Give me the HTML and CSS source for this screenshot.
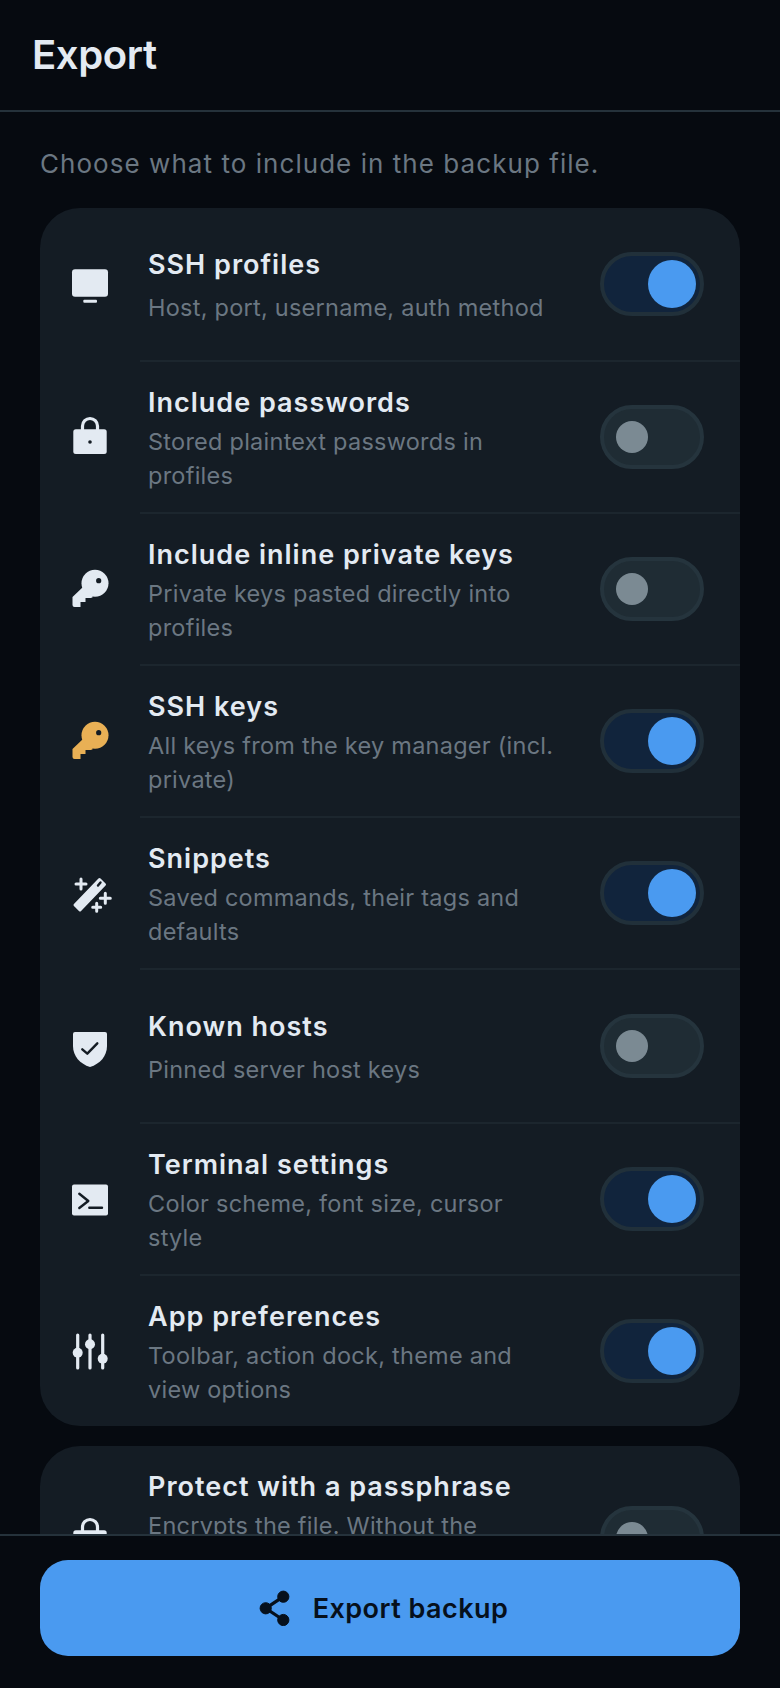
FILE: index.html
```html
<!DOCTYPE html>
<html lang="en">
<head>
  <meta charset="UTF-8" />
  <meta name="viewport" content="width=device-width, initial-scale=1" />
  <title>Export</title>
  <link rel="stylesheet" href="styles.css">
</head>
<body>
  <header class="top-bar">
    <h1>Export</h1>
  </header>

  <main class="content">
    <p class="intro">Choose what to include in the backup file.</p>

    <section class="card">
      <div class="row">
        <div class="row-icon">
          <svg viewBox="0 0 48 48"><rect x="6" y="9.3" width="36" height="27.4" rx="3"/><rect x="17.3" y="39.7" width="13.7" height="3" rx="1"/></svg>
        </div>
        <div class="row-body row-single">
          <div class="row-text">
            <div class="row-title">SSH profiles</div>
            <div class="row-desc">Host, port, username, auth method</div>
          </div>
          <div class="switch on"><span></span></div>
        </div>
      </div>

      <div class="row">
        <div class="row-icon">
          <svg viewBox="0 0 48 48"><path class="line" d="M16.5 17v-4a7.500 7.500 0 0 1 15 0v4"/><rect x="7.300" y="16.300" width="33.400" height="24.700" rx="2.500"/><circle class="cut" cx="24" cy="29" r="1.800"/></svg>
        </div>
        <div class="row-body">
          <div class="row-text">
            <div class="row-title">Include passwords</div>
            <div class="row-desc">Stored plaintext passwords in profiles</div>
          </div>
          <div class="switch"><span></span></div>
        </div>
      </div>

      <div class="row">
        <div class="row-icon">
          <svg viewBox="0 0 48 48"><circle cx="29" cy="18.300" r="13.500"/><path d="M6.500 32 17 22l10 10-2 1h-5.500v4h-5v5h-6a2 2 0 0 1-2-2z"/><circle class="cut" cx="32.700" cy="15.700" r="2.600"/></svg>
        </div>
        <div class="row-body">
          <div class="row-text">
            <div class="row-title">Include inline private keys</div>
            <div class="row-desc">Private keys pasted directly into profiles</div>
          </div>
          <div class="switch"><span></span></div>
        </div>
      </div>

      <div class="row">
        <div class="row-icon amber">
          <svg viewBox="0 0 48 48"><circle cx="29" cy="18.300" r="13.500"/><path d="M6.500 32 17 22l10 10-2 1h-5.500v4h-5v5h-6a2 2 0 0 1-2-2z"/><circle class="cut" cx="32.700" cy="15.700" r="2.600"/></svg>
        </div>
        <div class="row-body">
          <div class="row-text">
            <div class="row-title">SSH keys</div>
            <div class="row-desc">All keys from the key manager (incl. private)</div>
          </div>
          <div class="switch on"><span></span></div>
        </div>
      </div>

      <div class="row">
        <div class="row-icon">
          <svg viewBox="0 0 48 48"><path class="solid" d="M9 36 33.500 10.500l5 5L14 41z"/><path class="cut-line" d="m32 16.500 2.500-3"/><path class="line thin" d="M15 10v10M10 15h10M39.300 24.300v10M34.300 29.300h10M30.700 34.300v8M26.700 38.300h8"/></svg>
        </div>
        <div class="row-body">
          <div class="row-text">
            <div class="row-title">Snippets</div>
            <div class="row-desc">Saved commands, their tags and defaults</div>
          </div>
          <div class="switch on"><span></span></div>
        </div>
      </div>

      <div class="row">
        <div class="row-icon">
          <svg viewBox="0 0 48 48"><path d="M9 10h30a2 2 0 0 1 2 2v12c0 10-7 18-17 21C14 42 7 34 7 24V12a2 2 0 0 1 2-2z"/><path class="cut-line" d="m16.300 27.300 5 4.400 10-10.400"/></svg>
        </div>
        <div class="row-body row-single">
          <div class="row-text">
            <div class="row-title">Known hosts</div>
            <div class="row-desc">Pinned server host keys</div>
          </div>
          <div class="switch"><span></span></div>
        </div>
      </div>

      <div class="row">
        <div class="row-icon">
          <svg viewBox="0 0 48 48"><rect x="6" y="9.500" width="36" height="31" rx="2"/><path class="cut-line" d="m13.300 18.700 9 7.300-9 7M23.300 32.700H36"/></svg>
        </div>
        <div class="row-body">
          <div class="row-text">
            <div class="row-title">Terminal settings</div>
            <div class="row-desc">Color scheme, font size, cursor style</div>
          </div>
          <div class="switch on"><span></span></div>
        </div>
      </div>

      <div class="row">
        <div class="row-icon">
          <svg viewBox="0 0 48 48"><path class="line" d="M11.700 8v33M24 8v33M36.700 8v33"/><circle cx="11.700" cy="25.700" r="5"/><circle cx="24" cy="17.300" r="5"/><circle cx="36.700" cy="31.700" r="5"/></svg>
        </div>
        <div class="row-body no-line">
          <div class="row-text">
            <div class="row-title">App preferences</div>
            <div class="row-desc">Toolbar, action dock, theme and view options</div>
          </div>
          <div class="switch on"><span></span></div>
        </div>
      </div>
    </section>

    <section class="card">
      <div class="row">
        <div class="row-icon">
          <svg viewBox="0 0 48 48"><path class="line" d="M16.500 17v-4a7.500 7.500 0 0 1 15 0v4"/><rect x="7.300" y="16.300" width="33.400" height="24.700" rx="2.500"/><circle class="cut" cx="24" cy="29" r="1.800"/></svg>
        </div>
        <div class="row-body no-line">
          <div class="row-text">
            <div class="row-title">Protect with a passphrase</div>
            <div class="row-desc">Encrypts the file. Without the passphrase the backup cannot be restored.</div>
          </div>
          <div class="switch"><span></span></div>
        </div>
      </div>
    </section>
  </main>

  <footer class="bottom-bar">
    <button type="button" class="export-btn">
      <svg viewBox="0 0 36 36"><path class="line" d="M27.300 6.700 9.700 18.300 27.300 30"/><circle cx="27.300" cy="6.700" r="5.600"/><circle cx="9.700" cy="18.300" r="5.600"/><circle cx="27.300" cy="30" r="5.600"/></svg>
      <span>Export backup</span>
    </button>
  </footer>
</body>
</html>
```

FILE: styles.css
```css
* {
  box-sizing: border-box;
}

html, body {
  height: 100%;
}

body {
  margin: 0;
  display: flex;
  flex-direction: column;
  overflow: hidden;
  font-family: Inter, "Noto Sans", sans-serif;
  background: #060a10;
  color: #e3eaf2;
}

/* Top bar */
.top-bar {
  height: 112px;
  flex-shrink: 0;
  padding: 0 32px;
  display: flex;
  align-items: center;
  border-bottom: 2px solid #25323b;
}

.top-bar h1 {
  margin: 0;
  font-size: 40px;
  line-height: 50px;
  font-weight: 600;
  letter-spacing: -0.4px;
}

.content {
  flex: 1;
  min-height: 0;
  overflow: hidden;
  padding: 0 40px;
}

.intro {
  margin: 0;
  height: 96px;
  padding-top: 32px;
  font-size: 26px;
  line-height: 40px;
  letter-spacing: 1.05px;
  color: #6b7782;
}

.card {
  background: #141c24;
  border-radius: 40px;
  margin-bottom: 20px;
  overflow: hidden;
}

.row {
  display: flex;
}

.row-icon {
  width: 100px;
  flex-shrink: 0;
  padding-bottom: 2px;
  display: flex;
  align-items: center;
  justify-content: center;
  fill: #e3eaf2;
  stroke: #e3eaf2;
}

.row:last-child .row-icon {
  padding-bottom: 0;
}

.row-icon.amber {
  fill: #e9b055;
  stroke: #e9b055;
}

.row-icon svg {
  width: 48px;
  height: 48px;
  stroke-width: 0;
}

.line {
  fill: none;
  stroke-width: 3.2;
  stroke-linecap: round;
}

.line.thin {
  stroke-width: 3;
}

.solid {
  stroke-width: 3;
  stroke-linejoin: round;
}

.cut {
  fill: #141c24;
}

.cut-line {
  fill: none;
  stroke: #141c24;
  stroke-width: 2.4;
  stroke-linecap: round;
  stroke-linejoin: round;
}

.row-body {
  flex: 1;
  min-width: 0;
  padding: 19px 36px 19px 8px;
  display: flex;
  align-items: center;
  gap: 36px;
  border-bottom: 2px solid #1c262e;
}

.row-body.no-line {
  border-bottom: none;
}

.row-single {
  min-height: 154px;
}

.row-text {
  flex: 1;
  min-width: 0;
  padding-top: 2px;
}

.row-title {
  font-size: 27px;
  line-height: 40px;
  font-weight: 600;
  letter-spacing: 1px;
}

.row-desc {
  margin-top: 2px;
  font-size: 23.5px;
  line-height: 34px;
  letter-spacing: 0.25px;
  color: #6b7782;
}

.row-single .row-desc {
  margin-top: 6px;
}

/* Switches */
.switch {
  width: 104px;
  height: 64px;
  flex-shrink: 0;
  display: flex;
  align-items: center;
  padding-left: 12px;
  border-radius: 32px;
  background: #1f2c34;
  border: 4px solid #25343d;
}

.switch span {
  width: 32px;
  height: 32px;
  border-radius: 50%;
  background: #7b8a93;
}

.switch.on {
  justify-content: flex-end;
  padding: 0 4px 0 0;
  background: #11243c;
  border-color: #21303a;
}

.switch.on span {
  width: 48px;
  height: 48px;
  background: #4a9af0;
}

/* Footer */
.bottom-bar {
  height: 154px;
  flex-shrink: 0;
  padding: 24px 40px 0;
  background: #060a10;
  border-top: 2px solid #25323b;
}

.export-btn {
  width: 100%;
  height: 96px;
  padding: 0 16px 0 0;
  display: flex;
  align-items: center;
  justify-content: center;
  gap: 21px;
  border: none;
  border-radius: 28px;
  background: #4a9af0;
  color: #06101c;
  font-family: inherit;
  font-size: 27px;
  font-weight: 600;
  letter-spacing: 0.46px;
  cursor: pointer;
}

.export-btn svg {
  width: 36px;
  height: 36px;
  fill: #06101c;
  stroke: #06101c;
}
```
